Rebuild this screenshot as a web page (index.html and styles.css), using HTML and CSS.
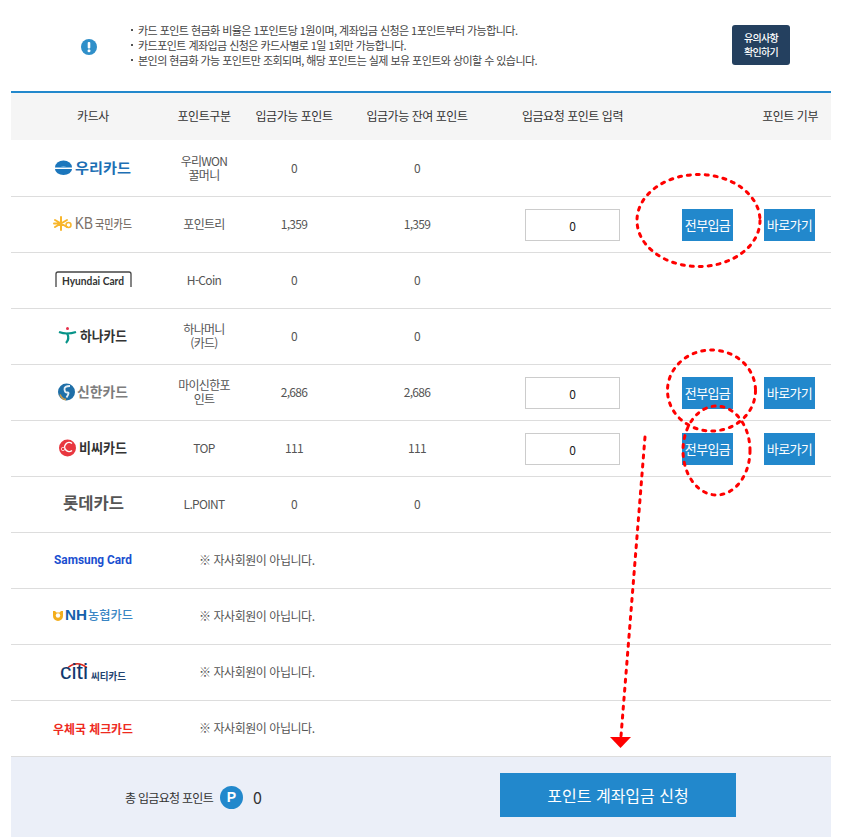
FILE: index.html
```html
<!DOCTYPE html>
<html lang="ko">
<head>
<meta charset="utf-8">
<title>포인트 계좌입금</title>
<link rel="stylesheet" href="styles.css">
</head>
<body>
<div class="page">
  <section class="notice">
    <svg class="notice-icon" width="18" height="18" viewBox="0 0 18 18"><circle cx="9" cy="9" r="8" fill="#2f8fc9"/><rect x="7.700" y="4" width="2.600" height="6.500" rx="1" fill="#fff"/><circle cx="9" cy="12.800" r="1.500" fill="#fff"/></svg>
    <ul class="notice-list">
      <li>카드 포인트 현금화 비율은 1포인트당 1원이며, 계좌입금 신청은 1포인트부터 가능합니다.</li>
      <li>카드포인트 계좌입금 신청은 카드사별로 1일 1회만 가능합니다.</li>
      <li>본인의 현금화 가능 포인트만 조회되며, 해당 포인트는 실제 보유 포인트와 상이할 수 있습니다.</li>
    </ul>
    <a class="notice-btn">유의사항<br>확인하기</a>
  </section>

  <table class="points">
    <colgroup><col class="c1"><col class="c2"><col class="c3"><col class="c4"><col class="c5"><col class="c6"></colgroup>
    <thead>
      <tr><th>카드사</th><th>포인트구분</th><th>입금가능 포인트</th><th>입금가능 잔여 포인트</th><th>입금요청 포인트 입력</th><th class="right">포인트 기부</th></tr>
    </thead>
    <tbody>
      <tr>
        <td><svg class="logo" viewBox="0 0 90 30"><path d="M7 15.500a8.500 7 0 0 1 17 0z" fill="#1b76bc"/><path d="M7 17a8.500 6 0 0 0 17 0z" fill="#1b76bc"/><path d="M11 15.800q4.500-3 9 0z" fill="#7db9e4"/><text x="27" y="21" class="lt b" fill="#1d6fb4" textLength="56" lengthAdjust="spacingAndGlyphs">우리카드</text></svg></td>
        <td class="kind">우리WON<br>꿀머니</td><td>0</td><td>0</td><td></td><td></td>
      </tr>
      <tr>
        <td><svg class="logo" viewBox="0 0 90 30"><g stroke="#f8b62c" stroke-width="2" stroke-linecap="round"><path d="M13 9v13M7 12l12 7M19 12l-12 7M6 15.500h5"/></g><circle cx="20.500" cy="17" r="2.500" fill="none" stroke="#f8b62c" stroke-width="1.500"/><text x="27" y="21" class="lm" fill="#7a7068" textLength="18" lengthAdjust="spacingAndGlyphs">KB</text><text x="47" y="21" class="ls" fill="#7a7068" textLength="37" lengthAdjust="spacingAndGlyphs">국민카드</text></svg></td>
        <td class="kind">포인트리</td><td>1,359</td><td>1,359</td>
        <td><input class="amount" type="text" value="0"></td>
        <td class="actions"><a class="btn">전부입금</a><a class="btn">바로가기</a></td>
      </tr>
      <tr>
        <td><svg class="logo" viewBox="0 0 90 30"><path d="M8 23V10q0-2 2-2h71q2 0 2 2v13" fill="none" stroke="#444" stroke-width="1.300"/><text x="14" y="20.500" class="le" fill="#333" textLength="62" lengthAdjust="spacingAndGlyphs">Hyundai Card</text></svg></td>
        <td class="kind">H-Coin</td><td>0</td><td>0</td><td></td><td></td>
      </tr>
      <tr>
        <td><svg class="logo" viewBox="0 0 90 30"><circle cx="19.500" cy="8.500" r="1.500" fill="#e6304a"/><path d="M11 12q8 3 17 0" fill="none" stroke="#079489" stroke-width="2.200"/><path d="M19 13q3 6-1 10" fill="none" stroke="#079489" stroke-width="2.200"/><text x="32" y="21" class="lt b" fill="#333" textLength="47" lengthAdjust="spacingAndGlyphs">하나카드</text></svg></td>
        <td class="kind">하나머니<br>(카드)</td><td>0</td><td>0</td><td></td><td></td>
      </tr>
      <tr>
        <td><svg class="logo" viewBox="0 0 90 30"><circle cx="18.500" cy="16" r="8.500" fill="#1f6fa8"/><path d="M22 10q-6 0-5.500 3.500t3 3-1 5" fill="none" stroke="#e5eef5" stroke-width="1.800"/><path d="M12 18.500q2 5 6 5" fill="none" stroke="#c79a4b" stroke-width="1.800"/><text x="29" y="21" class="lt b" fill="#7d7d7d" textLength="51" lengthAdjust="spacingAndGlyphs">신한카드</text></svg></td>
        <td class="kind">마이신한포<br>인트</td><td>2,686</td><td>2,686</td>
        <td><input class="amount" type="text" value="0"></td>
        <td class="actions"><a class="btn">전부입금</a><a class="btn">바로가기</a></td>
      </tr>
      <tr>
        <td><svg class="logo" viewBox="0 0 90 30"><circle cx="19.500" cy="16" r="8.500" fill="#e8373f"/><path d="M24 11.500a4.500 4.500 0 1 0 0 7" fill="none" stroke="#fff" stroke-width="1.500"/><circle cx="15" cy="17" r="1.700" fill="none" stroke="#fbc9cb" stroke-width="1"/><text x="31" y="21" class="lt b" fill="#333" textLength="48" lengthAdjust="spacingAndGlyphs">비씨카드</text></svg></td>
        <td class="kind">TOP</td><td>111</td><td>111</td>
        <td><input class="amount" type="text" value="0"></td>
        <td class="actions"><a class="btn">전부입금</a><a class="btn">바로가기</a></td>
      </tr>
      <tr>
        <td><svg class="logo" viewBox="0 0 90 30"><text x="15" y="21" class="lx b" fill="#555" textLength="61" lengthAdjust="spacingAndGlyphs">롯데카드</text></svg></td>
        <td class="kind">L.POINT</td><td>0</td><td>0</td><td></td><td></td>
      </tr>
      <tr>
        <td><svg class="logo" viewBox="0 0 90 30"><text x="6" y="20" class="lm-en" fill="#1a4fd0" textLength="78" lengthAdjust="spacingAndGlyphs">Samsung Card</text></svg></td>
        <td class="none" colspan="5">※ 자사회원이 아닙니다.</td>
      </tr>
      <tr>
        <td><svg class="logo" viewBox="0 0 90 30"><path d="M5 11h2l1.500 1.500h3L13 11h2v5a5 5 0 0 1-10 0z" fill="#f3ae1d"/><circle cx="10" cy="15.500" r="2.200" fill="#fff"/><text x="17" y="20" class="lm-en2" fill="#1560ab" textLength="22" lengthAdjust="spacingAndGlyphs">NH</text><text x="40" y="20" class="ls" fill="#3a86c4" textLength="45" lengthAdjust="spacingAndGlyphs">농협카드</text></svg></td>
        <td class="none" colspan="5">※ 자사회원이 아닙니다.</td>
      </tr>
      <tr>
        <td><svg class="logo" viewBox="0 0 90 30"><path d="M20 11.500q9-7.500 19 0" fill="none" stroke="#d9261c" stroke-width="1.400"/><text x="12" y="23" class="lc" fill="#12396e" textLength="28" lengthAdjust="spacingAndGlyphs">citi</text><text x="43" y="24" class="lt10 b" fill="#22426f" textLength="35" lengthAdjust="spacingAndGlyphs">씨티카드</text></svg></td>
        <td class="none" colspan="5">※ 자사회원이 아닙니다.</td>
      </tr>
      <tr>
        <td><svg class="logo" viewBox="0 0 90 30"><text x="5" y="21.500" class="lp b" fill="#ee2a1e" textLength="80" lengthAdjust="spacingAndGlyphs">우체국 체크카드</text></svg></td>
        <td class="none" colspan="5">※ 자사회원이 아닙니다.</td>
      </tr>
    </tbody>
  </table>

  <section class="summary">
    <div class="total"><span class="total-label">총 입금요청 포인트</span><span class="p-badge">P</span><span class="total-value">0</span></div>
    <a class="submit">포인트 계좌입금 신청</a>
  </section>

  <svg class="marks" width="847" height="840" viewBox="0 0 847 840">
    <g fill="none" stroke="#f00" stroke-width="3" stroke-linecap="round" stroke-dasharray="3 6">
      <ellipse cx="698.500" cy="220.500" rx="61.500" ry="46"/>
      <ellipse cx="711.500" cy="390.500" rx="44" ry="40.500"/>
      <ellipse cx="716.500" cy="450.500" rx="33.500" ry="44.500"/>
      <path d="M645 437L621 736"/>
    </g>
    <path d="M610 737h21l-10.500 11z" fill="#f00"/>
  </svg>
</div>
</body>
</html>
```
FILE: styles.css
```css
* { box-sizing: border-box; }
html, body { margin: 0; padding: 0; background: #fff; }
body { font-family: "Noto Sans CJK KR", "Noto Sans", sans-serif; font-size: 12px; color: #555; letter-spacing: -0.7px; }
.page { position: relative; width: 847px; height: 840px; padding: 0 16px 0 11px; overflow: hidden; }

.notice { height: 91px; display: flex; align-items: center; padding: 1px 41px 0 69px; }
.notice-icon { flex: none; margin-top: 2px; }
.notice-list { flex: 1; margin: -2px 0 0; padding: 0 0 0 32px; list-style: none; font-size: 11px; line-height: 15px; color: #444; letter-spacing: -0.55px; }
.notice-list li { position: relative; padding-left: 8px; white-space: nowrap; }
.notice-list li::before { content: ""; position: absolute; left: 1px; top: 6px; width: 2px; height: 2px; background: #555; }
.notice-btn { flex: none; width: 58px; height: 40px; margin-top: -3px; display: flex; align-items: center; justify-content: center; text-align: center; border-radius: 3px; background: #24405f; color: #fff; font-size: 10px; font-weight: 500; line-height: 14px; }

.points { width: 820px; table-layout: fixed; border-collapse: collapse; border-top: 2px solid #2288cc; }
.c1 { width: 164px; } .c2 { width: 58px; } .c3 { width: 122px; } .c4 { width: 124px; } .c5 { width: 187px; } .c6 { width: 165px; }
.points th { height: 48px; padding: 0 0 3px; background: #f5f5f5; font-weight: 400; font-size: 12px; color: #333; text-align: center; white-space: nowrap; letter-spacing: -0.45px; }
.points th.right { text-align: right; padding-right: 13px; }
.points td { height: 56px; padding: 0; border-bottom: 1px solid #ddd; text-align: center; vertical-align: middle; font-size: 12px; line-height: 14px; white-space: nowrap; }
.points tbody tr:last-child td { border-bottom: 0; }
.logo { display: block; width: 90px; height: 30px; margin: -2px auto 0; letter-spacing: 0; overflow: visible; }
.logo text { font-family: "Noto Sans CJK KR", sans-serif; font-size: 14px; letter-spacing: 0; }
.logo .b { font-weight: 700; }
.logo .lm { font-size: 16px; font-family: "Liberation Sans", sans-serif; }
.logo .ls { font-size: 12px; font-weight: 500; }
.logo .le { font-size: 11px; font-weight: 700; font-family: "Lato", sans-serif; }
.logo .lx { font-size: 16px; }
.logo .lm-en { font-size: 12px; font-weight: 700; font-family: "Roboto", sans-serif; }
.logo .lm-en2 { font-size: 15px; font-weight: 700; font-family: "Liberation Sans", sans-serif; }
.logo .lc { font-size: 22px; font-weight: 400; font-family: "Liberation Sans", sans-serif; }
.logo .lt10 { font-size: 10px; }
.logo .lp { font-size: 12px; }

.points td.none { text-align: left; padding-left: 24px; letter-spacing: -0.45px; }
.amount { display: block; width: 95px; height: 32px; margin: 2px auto 0; border: 1px solid #ccc; background: #fff; text-align: center; font: 12px "Noto Sans CJK KR", sans-serif; color: #222; padding: 0; outline: 0; }
.points td.actions { text-align: right; padding: 2px 16px 0 0; font-size: 0; line-height: 0; }
.btn { display: inline-block; width: 51px; height: 32px; background: #2288cc; color: #fff; font-size: 13px; line-height: 32px; text-align: center; letter-spacing: -0.6px; vertical-align: top; }
.btn + .btn { margin-left: 31px; }

.summary { height: 81px; background: #ebeff8; border-top: 1px solid #ddd; width: 820px; display: flex; align-items: center; padding: 0 95px 0 114px; justify-content: space-between; }
.total { display: flex; align-items: center; }
.total-label { font-size: 12px; color: #333; width: 95px; white-space: nowrap; }
.p-badge { width: 23px; height: 23px; border-radius: 50%; background: #2288cc; color: #fff; display: flex; align-items: center; justify-content: center; font: 700 14px "Liberation Sans", sans-serif; letter-spacing: 0; }
.total-value { margin-left: 10px; font-size: 16px; color: #333; letter-spacing: 0; }
.submit { width: 236px; height: 44px; margin-top: -4px; background: #2288cc; color: #fff; display: flex; align-items: center; justify-content: center; font-size: 16px; letter-spacing: 0; }

.marks { position: absolute; left: 0; top: 0; pointer-events: none; }
```
